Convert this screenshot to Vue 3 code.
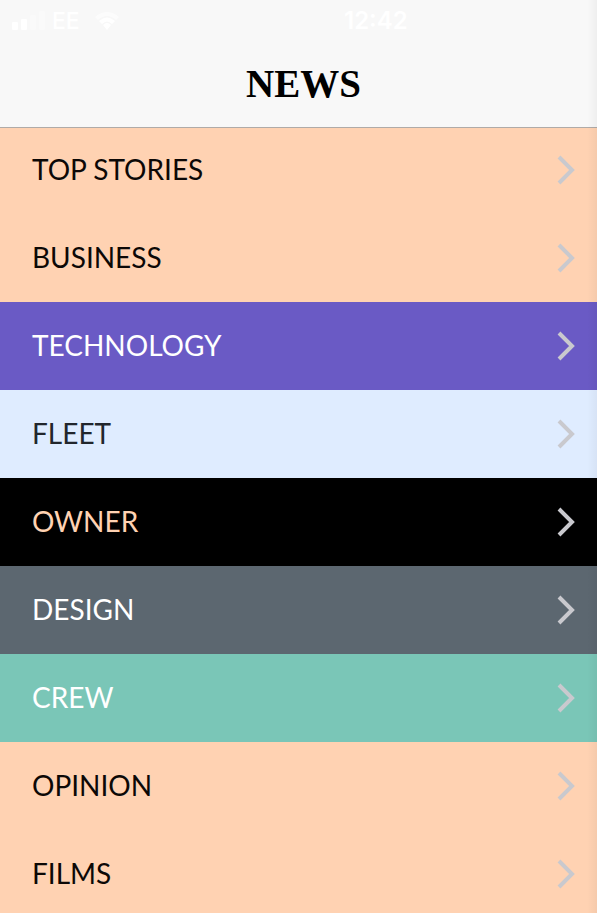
<script setup>
const sections = [
  { name: 'TOP STORIES', tone: 'peach' },
  { name: 'BUSINESS', tone: 'peach' },
  { name: 'TECHNOLOGY', tone: 'violet' },
  { name: 'FLEET', tone: 'sky' },
  { name: 'OWNER', tone: 'black' },
  { name: 'DESIGN', tone: 'slate' },
  { name: 'CREW', tone: 'mint' },
  { name: 'OPINION', tone: 'peach' },
  { name: 'FILMS', tone: 'peach' },
]
</script>

<template>
  <div class="page">
    <header class="header">
      <div class="status">
        <div class="carrier">
          <svg class="signal" width="34" height="20" viewBox="0 0 34 20" aria-hidden="true">
            <rect x="0" y="11" width="6" height="8" rx="1" fill="#fff" />
            <rect x="9" y="8" width="6" height="11" rx="1" fill="#fff" />
            <rect x="18" y="4" width="6" height="15" rx="1" fill="#fff" opacity="0.3" />
            <rect x="27" y="0" width="6" height="19" rx="1" fill="#fff" opacity="0.3" />
          </svg>
          <span>EE</span>
          <svg class="wifi" width="26" height="20" viewBox="0 0 26 20" fill="#fff" aria-hidden="true">
            <path d="M1 6Q13-4 25 6L22 9Q13 1 4 9Z" opacity="0.6" />
            <path d="M5 10Q13 3 21 10L18 13Q13 8 8 13Z" />
            <path d="M9 14Q13 10 17 14L13 19Z" />
          </svg>
        </div>
        <time class="time">12:42</time>
        <span></span>
      </div>
      <h1 class="title">NEWS</h1>
    </header>
    <nav class="list" aria-label="News sections">
      <a v-for="s in sections" :key="s.name" href="#" class="row" :class="s.tone">
        <span class="label">{{ s.name }}</span>
        <svg class="chevron" width="18" height="30" viewBox="0 0 18 30" aria-hidden="true">
          <path d="M2 2L15 15L2 28" fill="none" stroke="#c9c9ce" stroke-width="4" />
        </svg>
      </a>
    </nav>
    <div class="edge"></div>
  </div>
</template>

<style>
body {
  margin: 0;
  background: #ffd2b2;
}
</style>

<style scoped>
.page {
  position: relative;
  height: 100vh;
  overflow: hidden;
  font-family: Lato, "Open Sans", sans-serif;
}
.header {
  position: relative;
  z-index: 1;
  box-sizing: border-box;
  height: 128px;
  background: #f8f8f8;
  border-bottom: 1px solid #b0aba8;
}
.status {
  display: grid;
  grid-template-columns: 344px auto 1fr;
  align-items: center;
  height: 42px;
  color: #fff;
  font: 500 23px/40px Inter, sans-serif;
}
.carrier {
  display: flex;
  align-items: center;
  padding-left: 12px;
}
.signal {
  margin-right: 6px;
}
.wifi {
  margin-left: 14px;
}
.time {
  font-size: 24px;
  font-weight: 600;
}
.title {
  margin: 0;
  padding-left: 10px;
  text-align: center;
  color: #000;
  font: bold 39px/84px "Liberation Serif", serif;
}
.list {
  margin-top: -2px;
}
.row {
  display: flex;
  align-items: center;
  justify-content: space-between;
  box-sizing: border-box;
  height: 88px;
  padding: 0 22px 0 32px;
  font-size: 28px;
  line-height: 40px;
  text-decoration: none;
}
.label {
  padding-bottom: 2px;
}
.peach {
  background: #ffd2b2;
  color: #0c0806;
}
.violet {
  background: #6a5ac5;
  color: #fff;
}
.sky {
  background: #dfecff;
  color: #22262c;
}
.black {
  background: #000;
  color: #ffd2b2;
}
.slate {
  background: #5c6770;
  color: #fff;
}
.mint {
  background: #7ac6b7;
  color: #fff;
}
.edge {
  position: absolute;
  inset: 0 0 0 auto;
  z-index: 2;
  width: 10px;
  background: linear-gradient(to right, transparent, rgba(0, 0, 0, 0.04));
  pointer-events: none;
}
</style>
